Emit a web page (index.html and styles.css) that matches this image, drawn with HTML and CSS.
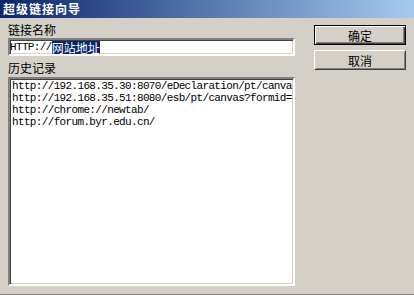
FILE: index.html
```html
<!DOCTYPE html>
<html lang="zh-CN">
<head>
    <meta charset="UTF-8">
    <title>超级链接向导</title>
    <link rel="stylesheet" href="styles.css">
</head>
<body>
    <div class="dialog">
        <div class="titlebar">超级链接向导</div>
        <div class="content">
            <div class="main">
                <div class="label">链接名称</div>
                <div class="field"><span class="mono">HTTP://</span><span class="sel">网站地址</span></div>
                <div class="label history-label">历史记录</div>
                <div class="list">
                    <div class="item">http://192.168.35.30:8070/eDeclaration/pt/canva</div>
                    <div class="item">http://192.168.35.51:8080/esb/pt/canvas?formid=</div>
                    <div class="item">http://chrome://newtab/</div>
                    <div class="item">http://forum.byr.edu.cn/</div>
                </div>
            </div>
            <div class="actions">
                <button class="btn default">确定</button>
                <button class="btn">取消</button>
            </div>
        </div>
    </div>
</body>
</html>
```

FILE: styles.css
```css
html, body {
    margin: 0;
    padding: 0;
}
body {
    background: #d4d0c8;
    font-family: "Noto Sans CJK SC", sans-serif;
    font-size: 12px;
    color: #000;
}
.dialog {
    width: 414px;
    height: 295px;
    box-sizing: border-box;
    border-bottom: 1px solid #808080;
    display: flex;
    flex-direction: column;
}
.titlebar {
    height: 18px;
    line-height: 18px;
    padding-left: 3px;
    background: linear-gradient(to right, #0a246a, #a6caf0);
    color: #fff;
    font-weight: bold;
    font-size: 12px;
    letter-spacing: 1px;
}
.content {
    flex: 1;
    display: flex;
}
.main {
    width: 287px;
    padding-left: 8px;
    display: flex;
    flex-direction: column;
}
.label {
    height: 16px;
    line-height: 16px;
    margin-top: 4px;
}
.history-label {
    margin-top: 4px;
    margin-bottom: 1px;
}
.field,
.list {
    background: #fff;
    border: 2px solid;
    border-color: #808080 #fff #fff #808080;
    box-shadow: inset 1px 1px 0 #404040, inset -1px -1px 0 #d4d0c8;
}
.field {
    height: 18px;
    box-sizing: border-box;
    display: flex;
    align-items: center;
    white-space: nowrap;
    overflow: hidden;
}
.mono,
.item {
    font-family: "Liberation Mono", monospace;
    font-size: 11px;
    letter-spacing: -0.65px;
}
.sel {
    background: #0a246a;
    color: #fff;
    line-height: 13px;
}
.list {
    height: 209px;
    box-sizing: border-box;
    padding: 1px 0 1px 2px;
    overflow: hidden;
}
.item {
    line-height: 12px;
    white-space: nowrap;
}
.actions {
    margin-left: 19px;
    padding-top: 7px;
    display: flex;
    flex-direction: column;
    gap: 5px;
}
.btn {
    width: 92px;
    height: 20px;
    box-sizing: border-box;
    padding: 0;
    background: #d4d0c8;
    font-family: "Noto Sans CJK SC", sans-serif;
    font-size: 12px;
    color: #000;
    border: 1px solid;
    border-color: #fff #404040 #404040 #fff;
    box-shadow: inset 1px 1px 0 #d4d0c8, inset -1px -1px 0 #808080;
}
.btn.default {
    border: 1px solid #000;
    box-shadow: inset 1px 1px 0 #fff, inset -1px -1px 0 #404040, inset -2px -2px 0 #808080;
}
```
